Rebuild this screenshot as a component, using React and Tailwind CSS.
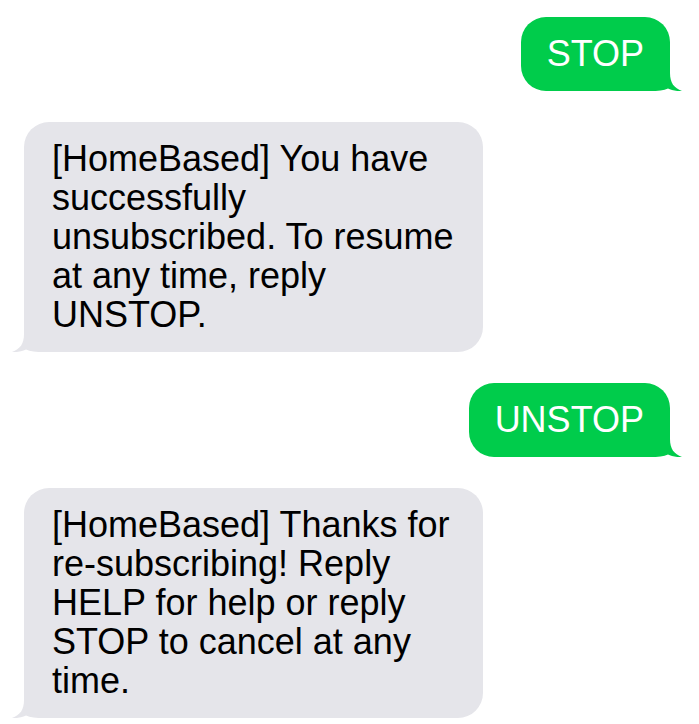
const messages = [
  { from: 'me', text: 'STOP' },
  { from: 'them', text: '[HomeBased] You have successfully unsubscribed. To resume at any time, reply UNSTOP.' },
  { from: 'me', text: 'UNSTOP' },
  { from: 'them', text: '[HomeBased] Thanks for re-subscribing! Reply HELP for help or reply STOP to cancel at any time.' },
];

const Tail = ({ side, color }) => (
  <svg
    width="42"
    height="30"
    viewBox="0 0 42 30"
    className={
      side === 'right'
        ? 'absolute bottom-0 right-[-12px]'
        : 'absolute bottom-0 left-[-12px] -scale-x-100'
    }
  >
    <path
      d="M0 0 H30 V12 C30 22 34 27 42 30 C36 30.5 31 29 28 27.5 C24 29.5 18 30 10 30 H0 Z"
      fill={color}
    />
  </svg>
);

const Bubble = ({ from, text }) => {
  const mine = from === 'me';
  return (
    <div className={`flex ${mine ? 'justify-end' : 'justify-start'}`}>
      <div
        className={`relative rounded-[25px] pt-[17px] pb-[18px] ${
          mine ? 'bg-[#00cc4b] text-white px-[26px]' : 'bg-[#e5e5ea] text-black px-7 max-w-[459px]'
        }`}
      >
        <Tail side={mine ? 'right' : 'left'} color={mine ? '#00cc4b' : '#e5e5ea'} />
        <p className="relative text-[36px] leading-[39px]">{text}</p>
      </div>
    </div>
  );
};

export default function App() {
  return (
    <div
      className="min-h-screen bg-white pt-[17px] pl-6 pr-[29px] flex flex-col gap-[31px]"
      style={{ fontFamily: '"Liberation Sans", Arial, sans-serif' }}
    >
      {messages.map((m, i) => (
        <Bubble key={i} {...m} />
      ))}
    </div>
  );
}
